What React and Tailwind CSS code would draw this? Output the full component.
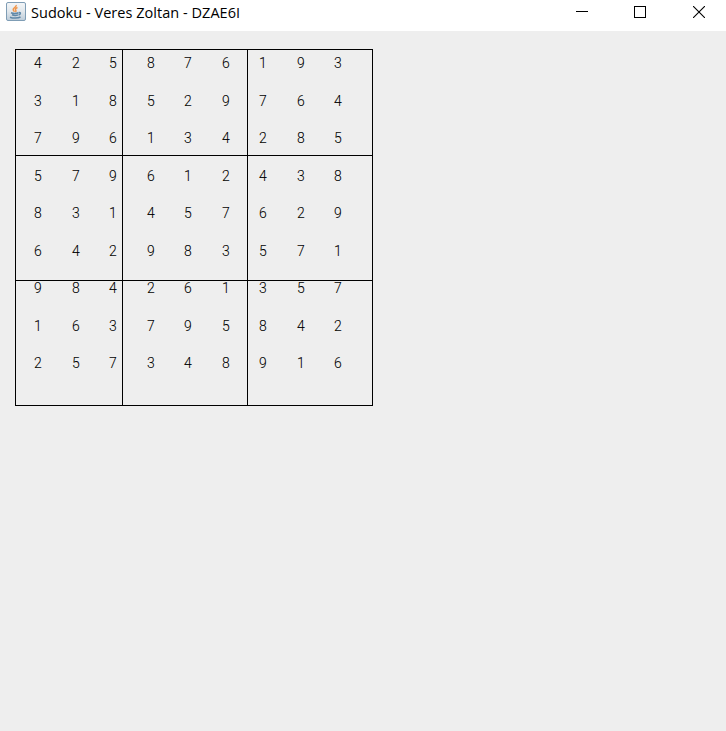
const ROWS = [
  '425876193',
  '318529764',
  '796134285',
  '579612438',
  '831457629',
  '642983571',
  '984261357',
  '163795842',
  '257348916',
];

function JavaIcon() {
  return (
    <svg width="20" height="20" viewBox="0 0 20 20" fill="none" aria-hidden="true">
      <defs>
        <linearGradient id="tile" x1="0" y1="0" x2="0" y2="1">
          <stop offset="0" stopColor="#f4f6f8" />
          <stop offset="0.5" stopColor="#e1e7ec" />
          <stop offset="1" stopColor="#bccbd8" />
        </linearGradient>
      </defs>
      <rect x="0.5" y="0.5" width="19" height="18" rx="1.5" fill="url(#tile)" stroke="#7f9db5" />
      <path d="M10.200 3c.5 2-3 2.700-3 4.500 0 1 1 1.500 1.200 2.300M11.500 5.500c-2 .8-2.500 1.700-1.800 2.700.5.700.2 1.300-.4 1.700" stroke="#f0954a" strokeWidth="1.5" />
      <path d="M5 10.700c2 .9 5.500.9 7.500 0M6 12.800c2 .8 4.500.8 6 0M12.800 10.500c2.200-.4 2.200 1.700-.2 2.500M4 15.200c3 1.300 8 1.200 10.500-.2" stroke="#5f88a8" strokeWidth="1.500" />
    </svg>
  );
}

function TitleBar() {
  return (
    <header className="flex h-[31px] items-start bg-white">
      <div className="pt-[2px] pl-[6px]">
        <JavaIcon />
      </div>
      <h1 className="ml-[5px] pt-[3px] font-['Open_Sans','Noto_Sans',sans-serif] text-[14.5px] leading-[20px] font-normal tracking-[0.035px] whitespace-nowrap text-black">
        Sudoku - Veres Zoltan - DZAE6I
      </h1>
      <div className="ml-auto flex pt-[6px] pr-[21px] text-black" aria-hidden="true">
        <svg className="mr-[46px]" width="12" height="12" shapeRendering="crispEdges">
          <path d="M0 5.500h12" stroke="currentColor" />
        </svg>
        <svg className="mr-[47px]" width="12" height="12" fill="none" shapeRendering="crispEdges">
          <rect x="0.5" y="0.5" width="11" height="11" stroke="currentColor" />
        </svg>
        <svg width="12" height="12">
          <path d="M0 0L12 12M12 0L0 12" stroke="currentColor" strokeWidth="1.1" />
        </svg>
      </div>
    </header>
  );
}

function Board() {
  return (
    <section className="relative mt-[18px] ml-[15px] h-[357px] w-[358px]">
      <div className="grid grid-cols-[38px_37px_38px_37px_38px_37px_38px_37px_38px] grid-rows-[38px_37px_38px_37px_38px_37px_38px_37px_38px] pt-[5px] pl-[18px] font-['Roboto','Liberation_Sans',sans-serif] text-[15.5px] leading-[18px] font-light text-black [-webkit-text-stroke:0.08px_black]">
        {ROWS.flatMap((row, r) =>
          [...row].map((n, c) => <span key={`${r}-${c}`} className="w-[10px] origin-center scale-x-90 text-center">{n}</span>)
        )}
      </div>
      <div className="absolute inset-0 grid grid-cols-[107px_125px_125px] grid-rows-[106px_125px_125px] border-r border-b border-black">
        {Array.from({ length: 9 }, (_, i) => (
          <div key={i} className="border-t border-l border-black" />
        ))}
      </div>
    </section>
  );
}

export default function App() {
  return (
    <main className="h-[731px] w-[726px] overflow-hidden bg-[#eeeeee]">
      <TitleBar />
      <Board />
    </main>
  );
}
